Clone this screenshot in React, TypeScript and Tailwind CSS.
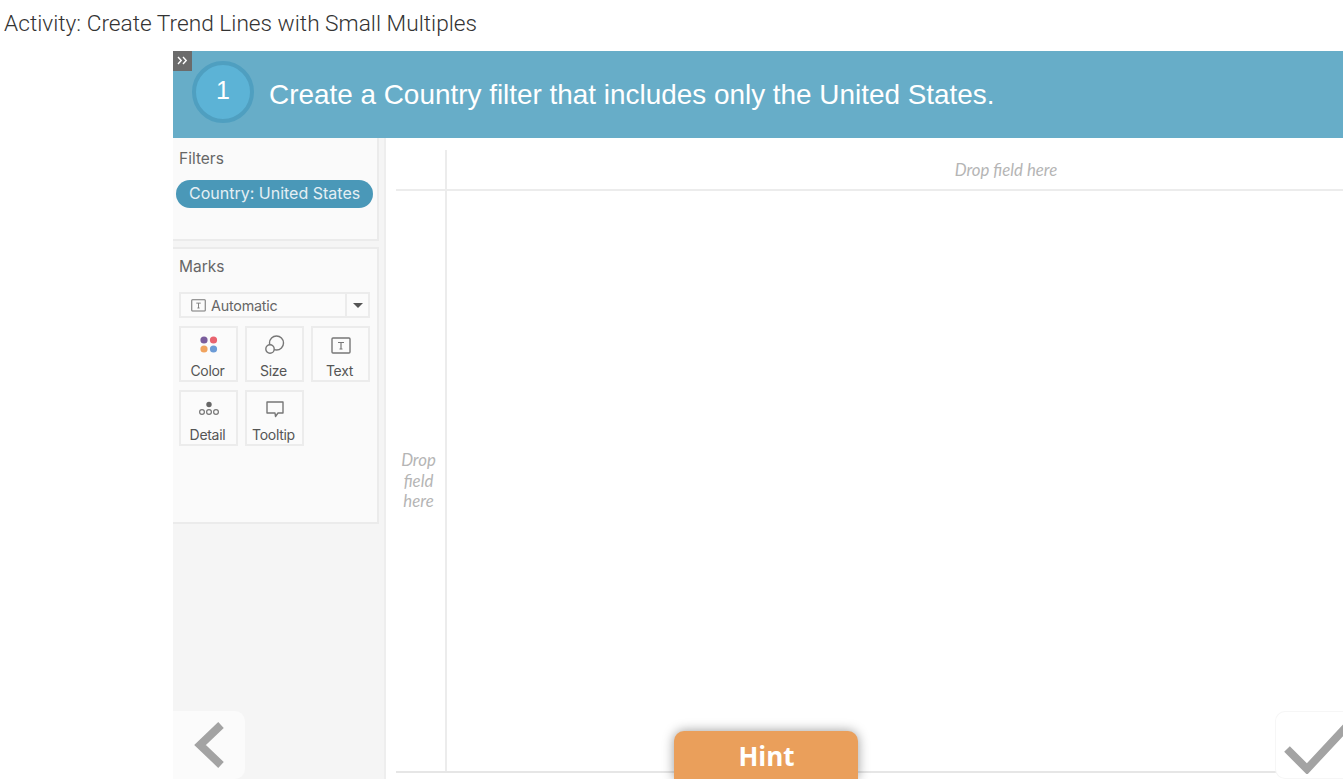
const sans = "font-['Inter',sans-serif]";

function Card({ label, children }: { label: string; children: React.ReactNode }) {
  return (
    <div className="w-[59px] h-[56px] border-2 border-[#ececec] bg-[#fbfbfb] flex flex-col items-center">
      <div className="h-[32px] flex items-center justify-center mt-[1px]">{children}</div>
      <div className="text-[14px] leading-[18px] mt-[1px] mr-[2px] text-[#555] tracking-[-0.3px]">{label}</div>
    </div>
  );
}

function TIcon({ size = 18 }: { size?: number }) {
  return (
    <svg width={size} height={size * 0.85} viewBox="0 0 20 17" fill="none">
      <rect x="1" y="1" width="18" height="15" rx="1" stroke="#777" strokeWidth="1.4" />
      <path d="M7 5.5h6M10 5.5v6.5M8.5 12h3" stroke="#777" strokeWidth="1.2" />
    </svg>
  );
}

export default function App() {
  return (
    <div className={`relative w-[1343px] h-[779px] overflow-hidden bg-white ${sans}`}>
      <div className="h-[51px] pl-[4px] pt-[10px] text-[22.7px] leading-[28px] font-light text-[#333] font-['Roboto',sans-serif] whitespace-nowrap">
        Activity: Create Trend Lines with Small Multiples
      </div>

      <div className="relative ml-[173px] h-[728px] flex flex-col">
        <div className="h-[87px] shrink-0 bg-[#67adc8] flex items-center pl-[19px]">
          <div className="w-[62px] h-[62px] mt-[-6px] rounded-full bg-[#5cb3d6] border-[4px] border-[#4f9fc0] flex items-center justify-center text-white text-[25px] pb-[2px] font-['Liberation_Sans',sans-serif]">
            1
          </div>
          <div className="ml-[15px] text-white text-[27.9px] leading-[34px] font-['Liberation_Sans',sans-serif] whitespace-nowrap">
            Create a Country filter that includes only the United States.
          </div>
        </div>

        <div className="flex-1 flex min-h-0">
          <div className="w-[211px] shrink-0 bg-[#f5f5f5] pr-[5px] flex flex-col gap-[6px]">
            <div className="h-[103px] bg-[#fafafa] border-r-2 border-b-2 border-[#ebebeb] pt-[10px] pl-[6px]">
              <div className="text-[15.5px] leading-[21px] text-[#666]">Filters</div>
              <div className="mt-[11px] ml-[-3px] w-[197px] h-[28px] rounded-full bg-[#4a98b8] text-[#e4eff4] text-[16px] leading-[26px] pl-[13px] whitespace-nowrap">
                Country: United States
              </div>
            </div>
            <div className="h-[277px] bg-[#fafafa] border-r-2 border-y-2 border-[#ebebeb] pt-[8px] pl-[6px]">
              <div className="text-[15.5px] leading-[20px] text-[#666]">Marks</div>
              <div className="mt-[15px] w-[191px] h-[26px] border-2 border-[#ececec] bg-[#fbfbfb] flex items-center">
                <div className="flex-1 flex items-center pl-[10px] gap-[5px] text-[14.3px] leading-[24px] pt-[1px] text-[#666]">
                  <TIcon size={15} />
                  <span className="tracking-[-0.2px]">Automatic</span>
                </div>
                <div className="w-[23px] h-full border-l-2 border-[#ececec] flex items-center justify-center">
                  <div className="w-0 h-0 border-x-[5px] border-x-transparent border-t-[5px] border-t-[#555]" />
                </div>
              </div>
              <div className="mt-[8px] flex gap-[7px]">
                <Card label="Color">
                  <svg width="20" height="20" viewBox="0 0 20 20">
                    <circle cx="5" cy="5" r="3.6" fill="#7a5d9c" />
                    <circle cx="14.5" cy="5" r="3.6" fill="#e8636f" />
                    <circle cx="5" cy="14" r="3.6" fill="#f0a35e" />
                    <circle cx="14.5" cy="14" r="3.6" fill="#6b9bd6" />
                  </svg>
                </Card>
                <Card label="Size">
                  <svg width="22" height="22" viewBox="0 0 22 22" fill="none" stroke="#777" strokeWidth="1.4">
                    <circle cx="12.5" cy="9" r="7" />
                    <circle cx="6" cy="15" r="4.2" fill="#fbfbfb" />
                  </svg>
                </Card>
                <Card label="Text">
                  <TIcon size={20} />
                </Card>
              </div>
              <div className="mt-[8px] flex gap-[7px]">
                <Card label="Detail">
                  <svg width="22" height="18" viewBox="0 0 22 18" fill="none">
                    <circle cx="11" cy="4.5" r="2.7" fill="#666" />
                    <circle cx="4" cy="12" r="2.4" stroke="#777" strokeWidth="1.2" />
                    <circle cx="11" cy="12" r="2.4" stroke="#777" strokeWidth="1.2" />
                    <circle cx="18" cy="12" r="2.4" stroke="#777" strokeWidth="1.2" />
                  </svg>
                </Card>
                <Card label="Tooltip">
                  <svg width="20" height="19" viewBox="0 0 20 19" fill="none" stroke="#777" strokeWidth="1.4">
                    <path d="M2 2h16v11h-5l-2.5 3.5L10 13H2z" strokeLinejoin="round" />
                  </svg>
                </Card>
              </div>
            </div>
          </div>

          <div className="flex-1 min-w-0 border-l-2 border-[#eeeeee] pl-[10px] pt-[12px] bg-white">
            <div className="h-[623px] grid grid-cols-[51px_1fr] grid-rows-[41px_1fr] border-b-2 border-[#e6e6e6] font-['Lato',sans-serif] italic text-[#b5b5b5] text-[16.8px]">
              <div className="border-b-2 border-r-2 border-[#ececec]" />
              <div className="border-b-2 border-[#ececec] flex items-center justify-center pt-[1px] pl-[222px]">Drop field here</div>
              <div className="border-r-2 border-[#ececec] flex items-center justify-center text-center leading-[20.5px] pr-[4px]">
                <div className="w-[46px]">Drop<br />field<br />here</div>
              </div>
              <div />
            </div>
          </div>
        </div>

        <div className="absolute left-0 top-0 w-[19px] h-[20px] bg-[#6b6b6b]">
          <svg className="mx-auto mt-[5px]" width="11" height="9" viewBox="0 0 11 9" fill="none" stroke="#fff" strokeWidth="1.4">
            <path d="M1 1l3.2 3.5L1 8M6 1l3.2 3.5L6 8" />
          </svg>
        </div>

        <div className="absolute left-0 top-[660px] w-[72px] h-[68px] bg-[#fbfbfb] rounded-r-[10px] flex items-center pl-[21px]">
          <svg width="32" height="48" viewBox="0 0 32 48" fill="none">
            <path d="M27 4L6 24l21 20" stroke="#a3a3a3" strokeWidth="8" />
          </svg>
        </div>

        <div className="absolute right-0 top-[660px] w-[68px] h-[68px] bg-white border border-[#f6f6f6] border-r-0 rounded-l-[10px] overflow-hidden">
          <svg className="absolute left-[7px] top-[8px]" width="61" height="54" viewBox="0 0 61 54" fill="none">
            <path d="M4 29l20 20L64 6" stroke="#a3a3a3" strokeWidth="8" />
          </svg>
        </div>

        <div className="absolute left-[501px] top-[680px] w-[184px] h-[48px] bg-[#ea9f5b] rounded-t-[10px] shadow-[0_0_12px_rgba(0,0,0,0.4)] flex items-start justify-center pt-[8px] pl-[1px] text-white font-bold text-[26px] leading-[34px] font-['Open_Sans',sans-serif]">
          Hint
        </div>
      </div>
    </div>
  );
}
